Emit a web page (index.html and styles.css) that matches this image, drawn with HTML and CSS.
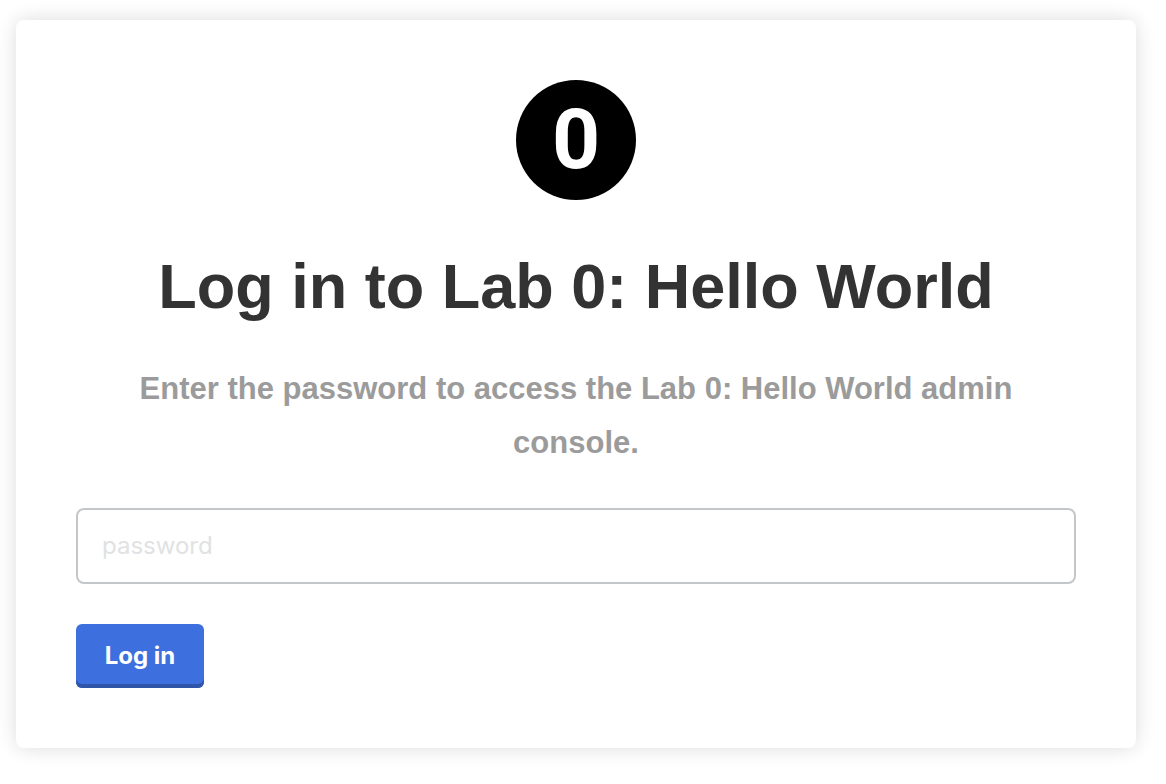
FILE: index.html
```html
<!DOCTYPE html>
<html lang="en">
<head>
<meta charset="utf-8">
<title>Log in to Lab 0: Hello World</title>
<link rel="stylesheet" href="styles.css">
</head>
<body>
<main class="card">
  <div class="logo">0</div>
  <h1 class="title">Log in to Lab 0: Hello World</h1>
  <p class="subtitle">Enter the password to access the Lab 0: Hello World admin console.</p>
  <form class="form">
    <input class="field" type="password" placeholder="password" aria-label="Password">
    <button class="submit" type="submit">Log in</button>
  </form>
</main>
</body>
</html>
```
FILE: styles.css
```css
* {
  box-sizing: border-box;
}

body {
  margin: 0;
  padding: 20px 30px 36px 16px;
  background: #fff;
  font-family: "Liberation Sans", Arial, sans-serif;
}

.card {
  padding: 60px;
  border-radius: 8px;
  background: #fff;
  box-shadow: 0 0 20px rgba(0, 0, 0, 0.14);
}

.logo {
  width: 120px;
  height: 120px;
  margin: 0 auto;
  border-radius: 50%;
  background: #000;
  color: #fff;
  font: bold 84px/120px Roboto, sans-serif;
  text-align: center;
}

.title {
  margin: 46px 0 0;
  color: #333;
  font-size: 63px;
  line-height: 80px;
  text-align: center;
}

.subtitle {
  margin: 36px 0 0;
  padding: 0 40px;
  color: #9b9b9b;
  font-size: 31px;
  font-weight: bold;
  line-height: 54px;
  text-align: center;
}

.form {
  display: flex;
  flex-direction: column;
  align-items: flex-start;
  gap: 40px;
  margin-top: 38px;
}

.field {
  width: 100%;
  height: 76px;
  padding: 0 24px 2px;
  border: 2px solid #c3c7ca;
  border-radius: 8px;
  background: #fff;
  color: #333;
  font: 24px Inter, sans-serif;
}

.field::placeholder {
  color: #e0e2e3;
  opacity: 1;
}

.submit {
  min-width: 128px;
  height: 64px;
  padding: 0 28px 2px;
  border: 0;
  border-radius: 6px;
  background: #3d6fde;
  box-shadow: inset 0 -4px 0 #2f55a8;
  color: #fff;
  font: bold 24px Inter, sans-serif;
}
```
